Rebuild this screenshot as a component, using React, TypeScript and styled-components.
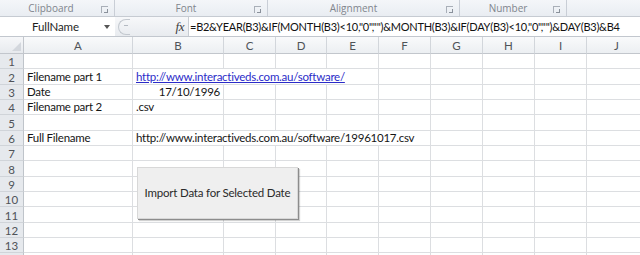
import React from "react";
import styled, { createGlobalStyle } from "styled-components";

const Global = createGlobalStyle`
  html, body { margin: 0; padding: 0; background: #ffffff; }
  body { width: 640px; height: 255px; overflow: hidden; }
  * { box-sizing: border-box; }
`;

const Page = styled.div`
  width: 640px;
  height: 255px;
  overflow: hidden;
  display: flex;
  flex-direction: column;
  font-family: Lato, "Open Sans", sans-serif;
`;

/* ---------- Ribbon group labels ---------- */
const Ribbon = styled.div`
  height: 17px;
  flex: none;
  display: grid;
  grid-template-columns: 115px 153px 192px 107px 1fr;
  background: linear-gradient(#f4f6f9, #e9edf2);
  border-bottom: 1px solid #c6cbd2;
`;

const Group = styled.div<{ $last?: boolean }>`
  position: relative;
  display: flex;
  align-items: center;
  justify-content: center;
  border-right: ${(p) => (p.$last ? "none" : "1px solid #c9ced6")};
  font-family: "Open Sans", "Noto Sans", sans-serif;
  font-size: 10px;
  color: #80858d;
  padding-bottom: 1px;
`;

const GroupName = styled.span<{ $shift: number }>`
  margin-right: ${(p) => p.$shift}px;
`;

const Launcher = styled.span`
  position: absolute;
  right: 6px;
  top: 6px;
  width: 7px;
  height: 7px;
  border-left: 1px solid #a9afb8;
  border-top: 1px solid #a9afb8;
  &::after {
    content: "";
    position: absolute;
    right: 0;
    bottom: 0;
    width: 3px;
    height: 3px;
    border-right: 1px solid #8a919b;
    border-bottom: 1px solid #8a919b;
  }
`;

/* ---------- Formula bar ---------- */
const FormulaBar = styled.div`
  height: 20px;
  flex: none;
  display: flex;
  background: #eceff3;
  border-bottom: 1px solid #c2c7ce;
`;

const NameBox = styled.div`
  width: 115px;
  display: flex;
  align-items: center;
  justify-content: space-between;
  background: #ffffff;
  padding: 0 5px 0 32px;
  font-size: 11.5px;
  letter-spacing: -0.1px;
  color: #1e1e1e;
`;

const Caret = styled.span`
  width: 0;
  height: 0;
  border-left: 3px solid transparent;
  border-right: 3px solid transparent;
  border-top: 4px solid #555;
`;

const Tools = styled.div`
  width: 73px;
  display: flex;
  align-items: center;
  justify-content: space-between;
  padding: 0 4px 0 3px;
  background: linear-gradient(#f7f8fa, #e8ebef);
`;

const Grip = styled.span`
  width: 12px;
  height: 16px;
  border: 1px solid #c3c8cf;
  border-right: none;
  border-radius: 8px 0 0 8px;
  display: flex;
  align-items: center;
  justify-content: center;
  &::after {
    content: "";
    width: 4px;
    height: 1px;
    background: #b4bac2;
    margin-left: 2px;
    margin-top: -3px;
  }
`;

const Fx = styled.span`
  font-family: "Liberation Serif", serif;
  font-style: italic;
  font-size: 13px;
  color: #3d3d3d;
  letter-spacing: -0.5px;
`;

const FormulaInput = styled.div`
  flex: 1;
  display: flex;
  align-items: center;
  background: #ffffff;
  border-left: 1px solid #c7ccd3;
  padding-left: 1px;
  font-size: 11px;
  letter-spacing: -0.25px;
  color: #111;
  white-space: nowrap;
  overflow: hidden;
`;

/* ---------- Sheet ---------- */
const Sheet = styled.div`
  position: relative;
  flex: none;
  display: grid;
  grid-template-columns: 24px 109px 91px 52px 51px 52px 52px 52px 52px 52px 60px;
  grid-template-rows: 17px 15px 16px 15px 15px 16px 15px 15px 16px 15px 15px 16px 15px 15px 16px;
`;

const Corner = styled.div`
  position: relative;
  background: linear-gradient(#f6f7f9, #e7eaee);
  border-right: 1px solid #c2c6cc;
  border-bottom: 1px solid #c2c6cc;
  &::after {
    content: "";
    position: absolute;
    right: 2px;
    bottom: 2px;
    width: 0;
    height: 0;
    border-left: 9px solid transparent;
    border-bottom: 9px solid #d3d7dd;
  }
`;

const ColHead = styled.div`
  display: flex;
  align-items: center;
  justify-content: center;
  background: linear-gradient(#f9fafb, #eceff2);
  border-right: 1px solid #d2d6db;
  border-bottom: 1px solid #c2c6cc;
  font-size: 11.5px;
  color: #4f5358;
  padding-top: 1px;
`;

const RowHead = styled.div`
  display: flex;
  align-items: center;
  justify-content: center;
  background: #e6e9ed;
  border-right: 1px solid #bfc4ca;
  border-bottom: 1px solid #d0d4d9;
  font-size: 11.5px;
  color: #4f5358;
  padding-top: 1px;
`;

const Cell = styled.div<{ $span?: number; $align?: "left" | "right" }>`
  grid-column: span ${(p) => p.$span ?? 1};
  display: flex;
  align-items: flex-end;
  justify-content: ${(p) => (p.$align === "right" ? "flex-end" : "flex-start")};
  padding: 0 3px 0 3px;
  border-right: 1px solid #dcdee1;
  border-bottom: 1px solid #dcdee1;
  font-size: 11.5px;
  letter-spacing: -0.25px;
  line-height: 14px;
  color: #151515;
  white-space: nowrap;
  overflow: hidden;
`;

const Link = styled.span`
  color: #2b2bc8;
  text-decoration: underline;
  text-underline-offset: 1px;
`;

const MacroButton = styled.div`
  position: absolute;
  left: 137px;
  top: 130px;
  width: 161px;
  height: 52px;
  display: flex;
  align-items: center;
  justify-content: center;
  background: #efefef;
  border: 1px solid #d8d8d8;
  box-shadow: 1px 1px 0 #8c8c8c, 2px 2px 1px rgba(0, 0, 0, 0.18);
  font-size: 11.5px;
  letter-spacing: -0.2px;
  color: #2a2a2a;
  white-space: nowrap;
  padding-bottom: 1px;
`;

type Row = { a?: React.ReactNode; b?: React.ReactNode; bSpan?: number; bAlign?: "left" | "right" };

const cols = ["A", "B", "C", "D", "E", "F", "G", "H", "I", "J"];
const rows: Row[] = [
  {},
  { a: "Filename part 1", b: <Link>http://www.interactiveds.com.au/software/</Link>, bSpan: 4 },
  { a: "Date", b: "17/10/1996", bAlign: "right" },
  { a: "Filename part 2", b: ".csv" },
  {},
  { a: "Full Filename", b: "http://www.interactiveds.com.au/software/19961017.csv", bSpan: 5 },
  {},
  {},
  {},
  {},
  {},
  {},
  {},
  {},
];

const formula =
  '=B2&YEAR(B3)&IF(MONTH(B3)<10,"0","")&MONTH(B3)&IF(DAY(B3)<10,"0","")&DAY(B3)&B4';

export default function App() {
  return (
    <>
      <Global />
      <Page>
        <Ribbon>
          <Group>
            <GroupName $shift={12}>Clipboard</GroupName>
            <Launcher />
          </Group>
          <Group>
            <GroupName $shift={10}>Font</GroupName>
            <Launcher />
          </Group>
          <Group>
            <GroupName $shift={20}>Alignment</GroupName>
            <Launcher />
          </Group>
          <Group>
            <GroupName $shift={10}>Number</GroupName>
            <Launcher />
          </Group>
          <Group $last />
        </Ribbon>
        <FormulaBar>
          <NameBox>
            FullName
            <Caret />
          </NameBox>
          <Tools>
            <Grip />
            <Fx>fx</Fx>
          </Tools>
          <FormulaInput>{formula}</FormulaInput>
        </FormulaBar>
        <Sheet>
          <Corner />
          {cols.map((c) => (
            <ColHead key={c}>{c}</ColHead>
          ))}
          {rows.map((r, i) => {
            const span = r.bSpan ?? 1;
            const rest = 9 - span;
            return (
              <React.Fragment key={i}>
                <RowHead>{i < 13 ? i + 1 : ""}</RowHead>
                <Cell>{r.a}</Cell>
                <Cell $span={span} $align={r.bAlign}>
                  {r.b}
                </Cell>
                {Array.from({ length: rest }).map((_, k) => (
                  <Cell key={k} />
                ))}
              </React.Fragment>
            );
          })}
          <MacroButton>Import Data for Selected Date</MacroButton>
        </Sheet>
      </Page>
    </>
  );
}
